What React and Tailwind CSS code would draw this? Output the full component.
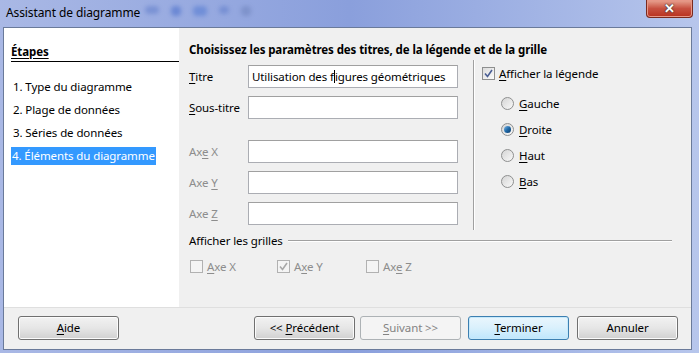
import React from "react";

const font = { fontFamily: '"Noto Sans", "Segoe UI", sans-serif' };

const U = ({ children }) => <span className="underline underline-offset-2">{children}</span>;

const TextBox = ({ children }) => (
  <div className="h-[23px] w-[210px] overflow-hidden whitespace-nowrap border border-[#abadb3] border-t-[#a0a0a0] bg-white px-[3px] text-[11.5px] leading-[21px] text-black">
    {children}
  </div>
);

const Radio = ({ checked, children }) => (
  <div className="flex h-[26px] items-center gap-[5px]">
    <span className="flex h-[13px] w-[13px] items-center justify-center rounded-full border border-[#8e8f8f] bg-gradient-to-br from-[#d5d5d5] to-[#f9f9f9]">
      {checked && (
        <span className="h-[7px] w-[7px] rounded-full bg-gradient-to-br from-[#7ab7e8] via-[#1f6aa8] to-[#0d3a6a]" />
      )}
    </span>
    <span className="text-[11.5px] text-black">{children}</span>
  </div>
);

const Check = ({ checked, disabled }) => (
  <span
    className={
      "flex h-[13px] w-[13px] items-center justify-center border " +
      (disabled ? "border-[#b1b1b1] bg-[#f4f4f4]" : "border-[#8e8f8f] bg-gradient-to-br from-[#dcdcdc] to-[#fbfbfb]")
    }
  >
    {checked && (
      <svg width="9" height="9" viewBox="0 0 9 9">
        <path
          d="M1 4.5 L3.5 7.5 L8 1"
          fill="none"
          stroke={disabled ? "#a8a8a8" : "#4a5e94"}
          strokeWidth="1.6"
        />
      </svg>
    )}
  </span>
);

const Button = ({ children, variant, className = "" }) => {
  const base = "flex h-[24px] w-[101px] items-center justify-center rounded-[3px] border text-[11.5px]";
  if (variant === "disabled")
    return <div className={`${base} border-[#adb2b5] bg-[#f4f4f4] text-[#838383] ${className}`}><span>{children}</span></div>;
  if (variant === "default")
    return (
      <div className={`${base} border-[#3c7fb1] bg-gradient-to-b from-[#eaf6fd] via-[#d9f0fc] to-[#bee6fd] text-black shadow-[inset_0_0_0_1px_#c6e9fb] ${className}`}>
        <span>{children}</span>
      </div>
    );
  return (
    <div className={`${base} border-[#707070] bg-gradient-to-b from-[#f2f2f2] via-[#e6e6e6] to-[#d0d0d0] text-black shadow-[inset_0_0_0_1px_#fbfbfb] ${className}`}>
      <span>{children}</span>
    </div>
  );
};

export default function App() {
  return (
    <div
      style={font}
      className="flex h-[353px] w-[699px] flex-col overflow-hidden bg-gradient-to-r from-[#a9b8e5] via-[#8a9fdc] to-[#b7c6ec] tracking-[-0.1px]"
    >
      {/* Title bar */}
      <div className="relative flex h-[27px] items-start">
        <span className="pl-[6px] pt-[4px] text-[12px] text-black">Assistant de diagramme</span>
        <div className="pointer-events-none absolute left-[145px] top-[6px] flex gap-[12px] opacity-50 blur-[2px]">
          <span className="h-[8px] w-[14px] rounded bg-[#5a78c8]" />
          <span className="h-[10px] w-[10px] rounded bg-[#3f66c8]" />
          <span className="h-[10px] w-[14px] rounded bg-[#4a74d0]" />
          <span className="h-[8px] w-[10px] rounded bg-[#5a78c8]" />
          <span className="h-[10px] w-[10px] rounded bg-[#6a7fb8]" />
        </div>
        <div className="absolute right-[6px] top-0 flex h-[18px] w-[47px] items-center justify-center rounded-b-[4px] border border-t-0 border-[#7a2a1e] bg-gradient-to-b from-[#e8a493] via-[#c75040] to-[#b8301d] shadow-[inset_0_0_0_1px_#e79787]">
          <span className="text-[13px] font-bold leading-none text-white [text-shadow:0_0_2px_#333,0_0_1px_#333]">✕</span>
        </div>
      </div>

      {/* Body */}
      <div className="mb-[3px] ml-[3px] mr-[7px] flex flex-1 flex-col border border-[#6a7a9a] bg-[#f0f0f0]">
        <div className="flex h-[279px]">
          {/* Steps */}
          <div className="w-[175px] bg-white pl-[7px]">
            <div className="mt-[16px] border-b border-black pb-[1px] text-[11.5px] font-bold leading-[16px] text-black underline underline-offset-2">
              Étapes
            </div>
            <div className="mt-[13px] flex flex-col text-[11.5px] text-black">
              <div className="flex h-[23px] items-center pl-[2px]">1. Type du diagramme</div>
              <div className="flex h-[23px] items-center pl-[2px]">2. Plage de données</div>
              <div className="flex h-[23px] items-center pl-[2px]">3. Séries de données</div>
              <div className="flex h-[23px] items-center">
                <span className="flex h-[18px] items-center bg-[#3399ff] px-[1px] text-white">4. Éléments du diagramme</span>
              </div>
            </div>
          </div>

          {/* Options */}
          <div className="flex flex-1 flex-col pl-[10px]">
            <div className="mt-[14px] text-[11.5px] font-bold leading-[16px] text-black">
              Choisissez les paramètres des titres, de la légende et de la grille
            </div>
            <div className="mt-[2px] flex">
              <div className="flex w-[284px] flex-col gap-[8px] pt-[5px]">
                <div className="flex items-center">
                  <span className="w-[59px] text-[11.5px] text-black"><U>T</U>itre</span>
                  <TextBox>
                    Utilisation des f<span className="inline-block h-[13px] w-px translate-y-[2px] bg-black" />igures géométriques
                  </TextBox>
                </div>
                <div className="flex items-center">
                  <span className="w-[59px] text-[11.5px] text-black"><U>S</U>ous-titre</span>
                  <TextBox />
                </div>
                <div className="mt-[13px] flex items-center">
                  <span className="w-[59px] text-[11.5px] text-[#8d8d8d]">Ax<U>e</U> X</span>
                  <TextBox />
                </div>
                <div className="flex items-center">
                  <span className="w-[59px] text-[11.5px] text-[#8d8d8d]">Axe <U>Y</U></span>
                  <TextBox />
                </div>
                <div className="flex items-center">
                  <span className="w-[59px] text-[11.5px] text-[#8d8d8d]">Axe <U>Z</U></span>
                  <TextBox />
                </div>
              </div>
              <div className="h-[170px] w-px bg-[#a0a0a0] shadow-[1px_0_0_#ffffff]" />
              <div className="flex flex-col pl-[8px] pt-[5px]">
                <div className="flex items-center gap-[4px]">
                  <Check checked />
                  <span className="text-[11.5px] text-black"><U>A</U>fficher la légende</span>
                </div>
                <div className="ml-[19px] mt-[8px] flex flex-col">
                  <Radio><U>G</U>auche</Radio>
                  <Radio checked><U>D</U>roite</Radio>
                  <Radio><U>H</U>aut</Radio>
                  <Radio><U>B</U>as</Radio>
                </div>
              </div>
            </div>

            <div className="mt-[2px] flex items-center pr-[19px]">
              <span className="text-[11.5px] text-black">Afficher les grilles</span>
              <div className="ml-[5px] h-px flex-1 bg-[#a0a0a0] shadow-[0_1px_0_#ffffff]" />
            </div>
            <div className="mt-[9px] flex items-center text-[11.5px] text-[#8d8d8d]">
              <div className="flex w-[88px] items-center gap-[4px] pl-[1px]">
                <Check disabled />
                <span><U>A</U>xe X</span>
              </div>
              <div className="flex w-[89px] items-center gap-[4px]">
                <Check disabled checked />
                <span>A<U>x</U>e Y</span>
              </div>
              <div className="flex items-center gap-[4px]">
                <Check disabled />
                <span>Ax<U>e</U> Z</span>
              </div>
            </div>
          </div>
        </div>

        {/* Buttons */}
        <div className="flex flex-1 items-start border-t border-[#dfdfdf] pt-[8px]">
          <Button className="ml-[14px]"><U>A</U>ide</Button>
          <Button className="ml-[135px]">&lt;&lt; <U>P</U>récédent</Button>
          <Button variant="disabled" className="ml-[5px]"><U>S</U>uivant &gt;&gt;</Button>
          <Button variant="default" className="ml-[7px]"><U>T</U>erminer</Button>
          <Button className="ml-[8px]">Annuler</Button>
        </div>
      </div>
    </div>
  );
}
